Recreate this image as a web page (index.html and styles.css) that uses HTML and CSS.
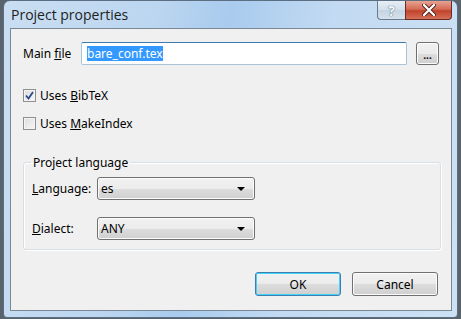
FILE: index.html
```html
<!DOCTYPE html>
<html lang="en">
<head>
  <meta charset="UTF-8" />
  <title>Project properties</title>
  <link rel="stylesheet" href="styles.css">
</head>
<body>

  <div class="window">
    <div class="titlebar">
      <span class="title">Project properties</span>
      <div class="caption-buttons">
        <div class="cap-btn help">?</div>
        <div class="cap-btn close">
          <svg width="14" height="12" viewBox="0 0 14 12">
            <path d="M2 1 L12 11 M12 1 L2 11" stroke="#4a1a14" stroke-width="4" stroke-linecap="round"/>
            <path d="M2 1 L12 11 M12 1 L2 11" stroke="#ffffff" stroke-width="2.4" stroke-linecap="round"/>
          </svg>
        </div>
      </div>
    </div>

    <div class="client">
      <div class="file-row">
        <label class="lbl-file">Main <u>f</u>ile</label>
        <div class="textbox"><span class="selected">bare_conf.tex</span></div>
        <button class="btn small">...</button>
      </div>

      <div class="check-row first">
        <span class="checkbox checked">
          <svg width="9" height="9" viewBox="0 0 9 9"><path d="M1 4.5 L3.5 7.5 L8 1" stroke="#2a4a8c" stroke-width="1.8" fill="none"/></svg>
        </span>
        <span>Uses <u>B</u>ibTeX</span>
      </div>
      <div class="check-row">
        <span class="checkbox"></span>
        <span>Uses <u>M</u>akeIndex</span>
      </div>

      <fieldset class="group">
        <legend>Project language</legend>
        <div class="combo-row">
          <label><u>L</u>anguage:</label>
          <div class="combo"><span>es</span><span class="arrow"></span></div>
        </div>
        <div class="combo-row">
          <label><u>D</u>ialect:</label>
          <div class="combo"><span>ANY</span><span class="arrow"></span></div>
        </div>
      </fieldset>

      <div class="actions">
        <button class="btn default">OK</button>
        <button class="btn">Cancel</button>
      </div>
    </div>
  </div>

</body>
</html>
```

FILE: styles.css
```css
body {
  margin: 0;
  background: #59636c;
  font-family: "Noto Sans", "Liberation Sans", sans-serif;
  font-size: 12px;
  color: #000;
  width: 461px;
  height: 319px;
  overflow: hidden;
}
.window {
  margin-left: 3px;
  width: 455px;
  height: 318px;
  box-sizing: border-box;
  border: 1px solid #5c6f82;
  border-radius: 7px 7px 4px 4px;
  background: linear-gradient(100deg, #c9def2 0%, #bcd6f0 30%, #a9cbee 45%, #c2daf2 65%, #cde1f4 100%);
  display: flex;
  flex-direction: column;
  padding: 0 5px 6px 6px;
}
.titlebar {
  height: 27px;
  display: flex;
  align-items: flex-start;
  justify-content: space-between;
}
.title {
  font-family: "Open Sans", "Noto Sans", sans-serif;
  font-size: 14px;
  margin-top: 4px;
  margin-left: 1px;
  color: #1e1e1e;
}
.caption-buttons {
  display: flex;
  margin-right: 0;
}
.cap-btn {
  height: 19px;
  box-sizing: border-box;
  border: 1px solid #6b7c8e;
  border-top: none;
  display: flex;
  align-items: center;
  justify-content: center;
}
.help {
  width: 28px;
  border-radius: 0 0 0 4px;
  border-right: none;
  background: linear-gradient(#e6eef6, #d3dfea 50%, #c4d4e3 51%, #d6e2ec);
  color: #f4f7fa;
  font-weight: bold;
  font-size: 14px;
  text-shadow: 0 0 1px #55677a, 0 0 1px #55677a;
}
.close {
  width: 47px;
  border-radius: 0 0 4px 0;
  border-color: #6b2a22;
  background: linear-gradient(#e8a493, #d56b55 45%, #c2422a 55%, #d6705a);
}
.client {
  flex: 1;
  border: 1px solid #7a8896;
  background: #f0f0f0;
  padding: 13px 12px 0 12px;
  display: flex;
  flex-direction: column;
}
.file-row {
  display: flex;
  align-items: center;
  height: 23px;
}
.lbl-file {
  width: 58px;
}
.textbox {
  width: 326px;
  height: 23px;
  box-sizing: border-box;
  border: 1px solid #a9c4dc;
  border-top-color: #3d7bad;
  border-radius: 2px;
  background: #fff;
  padding: 2px 5px;
  display: flex;
  align-items: center;
}
.selected {
  background: #3399ff;
  color: #fff;
  line-height: 15px;
}
.btn {
  font-family: inherit;
  font-size: 12px;
  color: #000;
  box-sizing: border-box;
  border: 1px solid #707070;
  border-radius: 3px;
  background: linear-gradient(#f2f2f2 0%, #ebebeb 50%, #dddddd 51%, #cfcfcf 100%);
  box-shadow: inset 0 0 0 1px #fcfcfc;
  padding: 0;
}
.btn.small {
  width: 23px;
  height: 23px;
  margin-left: 9px;
  line-height: 1;
  padding-top: 2px;
  font-weight: bold;
  font-size: 10px;
}
.check-row {
  display: flex;
  align-items: center;
  gap: 4px;
  margin-top: 13px;
  height: 14px;
}
.check-row.first {
  margin-top: 23px;
}
.check-row + .check-row {
  margin-top: 14px;
}
.checkbox {
  width: 13px;
  height: 13px;
  box-sizing: border-box;
  border: 1px solid #8e8f8f;
  background: linear-gradient(135deg, #dcdcdc, #f7f7f7);
  box-shadow: inset 0 0 0 1px #f4f4f4;
  display: flex;
  align-items: center;
  justify-content: center;
}
.group {
  margin: 24px 0 0 0;
  width: 418px;
  height: 96px;
  box-sizing: border-box;
  border: 1px solid #d5dfe5;
  border-radius: 3px;
  box-shadow: inset 1px 1px 0 #fff, 1px 1px 0 #fff;
  padding: 6px 8px 0 8px;
}
.group legend {
  padding: 0 2px;
  margin-left: -1px;
}
.combo-row {
  display: flex;
  align-items: center;
  height: 23px;
  margin-bottom: 17px;
}
.combo-row label {
  width: 65px;
}
.combo {
  width: 158px;
  height: 23px;
  box-sizing: border-box;
  border: 1px solid #707070;
  border-radius: 3px;
  background: linear-gradient(#f2f2f2 0%, #ebebeb 50%, #dddddd 51%, #cfcfcf 100%);
  box-shadow: inset 0 0 0 1px #fcfcfc;
  display: flex;
  align-items: center;
  justify-content: space-between;
  padding: 0 9px 0 3px;
}
.arrow {
  width: 0;
  height: 0;
  border-left: 4px solid transparent;
  border-right: 4px solid transparent;
  border-top: 4px solid #000;
}
.actions {
  display: flex;
  justify-content: flex-end;
  gap: 11px;
  margin-top: 22px;
  margin-right: 1px;
}
.actions .btn {
  width: 86px;
  height: 24px;
}
.btn.default {
  border-color: #3c7fb1;
  box-shadow: inset 0 0 0 1px #48d1f6;
}
```
